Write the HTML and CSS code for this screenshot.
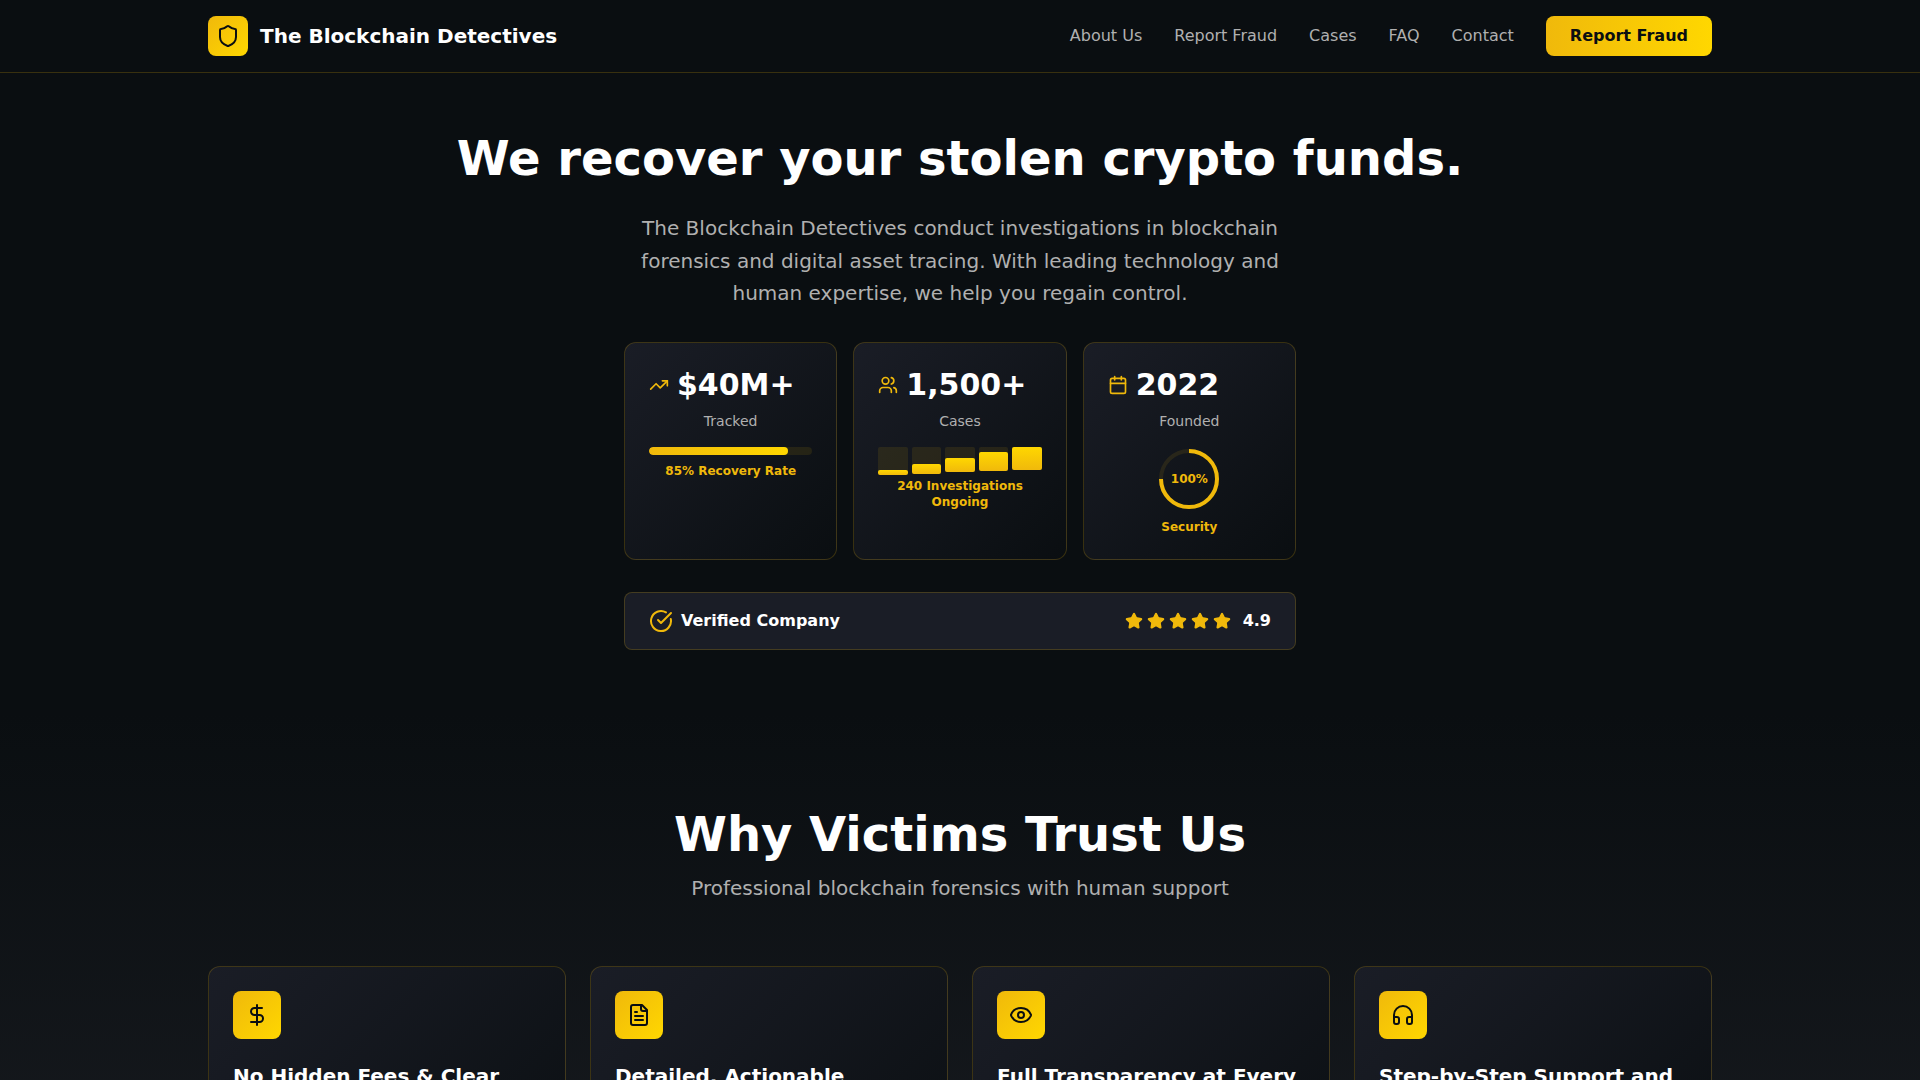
FILE: index.html
```html
<!DOCTYPE html>
<html lang="en">
<head>
<meta charset="utf-8">
<meta name="viewport" content="width=device-width, initial-scale=1">
<title>The Blockchain Detectives</title>
<link rel="stylesheet" href="styles.css">
</head>
<body>
<svg class="sprite" aria-hidden="true">
  <symbol id="star" viewBox="0 0 24 24"><path d="M11.525 2.295a.53.53 0 0 1 .95 0l2.31 4.679a2.123 2.123 0 0 0 1.595 1.16l5.166.756a.53.53 0 0 1 .294.904l-3.736 3.638a2.123 2.123 0 0 0-.611 1.878l.882 5.14a.53.53 0 0 1-.771.56l-4.618-2.428a2.122 2.122 0 0 0-1.973 0L6.396 21.01a.53.53 0 0 1-.77-.56l.881-5.139a2.122 2.122 0 0 0-.611-1.879L2.16 9.795a.53.53 0 0 1 .294-.906l5.165-.755a2.122 2.122 0 0 0 1.597-1.16z"/></symbol>
</svg>

<header class="header">
  <div class="container header-inner">
    <a class="brand" href="#">
      <span class="tile tile-small"><svg class="icon" viewBox="0 0 24 24"><path d="M20 13c0 5-3.5 7.5-7.66 8.95a1 1 0 0 1-.67-.01C7.5 20.5 4 18 4 13V6a1 1 0 0 1 1-1c2 0 4.500-1.200 6.240-2.720a1.170 1.170 0 0 1 1.520 0C14.510 3.810 17 5 19 5a1 1 0 0 1 1 1z"/></svg></span>
      <span class="brand-name">The Blockchain Detectives</span>
    </a>
    <nav class="nav">
      <a href="#about">About Us</a>
      <a href="#report">Report Fraud</a>
      <a href="#cases">Cases</a>
      <a href="#faq">FAQ</a>
      <a href="#contact">Contact</a>
      <button class="button" type="button">Report Fraud</button>
    </nav>
  </div>
</header>

<main>
  <section class="hero">
    <h1 class="title">We recover your stolen crypto funds.</h1>
    <p class="lead">The Blockchain Detectives conduct investigations in blockchain forensics and digital asset tracing. With leading technology and human expertise, we help you regain control.</p>

    <div class="stats">
      <article class="card stat">
        <div class="stat-head">
          <svg class="icon gold" viewBox="0 0 24 24"><path d="M22 7 13.500 15.500 8.500 10.500 2 17"/><path d="M16 7h6v6"/></svg>
          <span class="stat-value">$40M+</span>
        </div>
        <p class="stat-label">Tracked</p>
        <div class="progress"><div class="progress-fill" style="width:85%"></div></div>
        <p class="stat-note">85% Recovery Rate</p>
      </article>

      <article class="card stat">
        <div class="stat-head">
          <svg class="icon gold" viewBox="0 0 24 24"><path d="M16 21v-2a4 4 0 0 0-4-4H6a4 4 0 0 0-4 4v2"/><circle cx="9" cy="7" r="4"/><path d="M22 21v-2a4 4 0 0 0-3-3.870"/><path d="M16 3.130a4 4 0 0 1 0 7.750"/></svg>
          <span class="stat-value">1,500+</span>
        </div>
        <p class="stat-label">Cases</p>
        <div class="bars">
          <div class="bar" style="height:28px"><div class="bar-fill" style="height:5px"></div></div>
          <div class="bar" style="height:27px"><div class="bar-fill" style="height:10px"></div></div>
          <div class="bar" style="height:25px"><div class="bar-fill" style="height:14px"></div></div>
          <div class="bar" style="height:24px"><div class="bar-fill" style="height:19px"></div></div>
          <div class="bar" style="height:23px"><div class="bar-fill" style="height:23px"></div></div>
        </div>
        <p class="stat-note">240 Investigations Ongoing</p>
      </article>

      <article class="card stat">
        <div class="stat-head">
          <svg class="icon gold" viewBox="0 0 24 24"><path d="M8 2v4"/><path d="M16 2v4"/><rect x="3" y="4" width="18" height="18" rx="2"/><path d="M3 10h18"/></svg>
          <span class="stat-value">2022</span>
        </div>
        <p class="stat-label">Founded</p>
        <div class="ring">
          <svg class="ring-drawing" viewBox="0 0 64 64"><circle class="ring-track" cx="32" cy="32" r="28"/><path class="ring-arc" d="M32 4A28 28 0 1 1 4 32"/></svg>
          <span class="ring-text">100%</span>
        </div>
        <p class="stat-note">Security</p>
      </article>
    </div>

    <div class="verified">
      <div class="verified-name">
        <svg class="icon icon-large gold" viewBox="0 0 24 24"><path d="M21.801 10A10 10 0 1 1 17 3.335"/><path d="m9 11 3 3L22 4"/></svg>
        <span>Verified Company</span>
      </div>
      <div class="rating">
        <div class="stars">
          <svg class="star"><use href="#star"/></svg>
          <svg class="star"><use href="#star"/></svg>
          <svg class="star"><use href="#star"/></svg>
          <svg class="star"><use href="#star"/></svg>
          <svg class="star"><use href="#star"/></svg>
        </div>
        <span>4.9</span>
      </div>
    </div>
  </section>

  <section class="trust">
    <div class="container">
      <h2 class="title trust-title">Why Victims Trust Us</h2>
      <p class="subtitle">Professional blockchain forensics with human support</p>
      <div class="features">
        <article class="card feature">
          <span class="tile"><svg class="icon icon-large" viewBox="0 0 24 24"><path d="M12 2v20"/><path d="M17 5H9.500a3.500 3.500 0 0 0 0 7h5a3.500 3.500 0 0 1 0 7H6"/></svg></span>
          <h3 class="feature-title">No Hidden Fees &amp; Clear</h3>
        </article>
        <article class="card feature">
          <span class="tile"><svg class="icon icon-large" viewBox="0 0 24 24"><path d="M15 2H6a2 2 0 0 0-2 2v16a2 2 0 0 0 2 2h12a2 2 0 0 0 2-2V7Z"/><path d="M14 2v4a2 2 0 0 0 2 2h4"/><path d="M10 9H8"/><path d="M16 13H8"/><path d="M16 17H8"/></svg></span>
          <h3 class="feature-title">Detailed, Actionable</h3>
        </article>
        <article class="card feature">
          <span class="tile"><svg class="icon icon-large" viewBox="0 0 24 24"><path d="M2.062 12.348a1 1 0 0 1 0-.696 10.750 10.750 0 0 1 19.876 0 1 1 0 0 1 0 .696 10.750 10.750 0 0 1-19.876 0"/><circle cx="12" cy="12" r="3"/></svg></span>
          <h3 class="feature-title">Full Transparency at Every</h3>
        </article>
        <article class="card feature">
          <span class="tile"><svg class="icon icon-large" viewBox="0 0 24 24"><path d="M3 14h3a2 2 0 0 1 2 2v3a2 2 0 0 1-2 2H5a2 2 0 0 1-2-2v-7a9 9 0 0 1 18 0v7a2 2 0 0 1-2 2h-1a2 2 0 0 1-2-2v-3a2 2 0 0 1 2-2h3"/></svg></span>
          <h3 class="feature-title">Step-by-Step Support and</h3>
        </article>
      </div>
    </div>
  </section>
</main>
</body>
</html>
```
FILE: styles.css
```css
:root {
  --bg: #0a0e11;
  --surface: #1a1d26;
  --section-end: #1a1d22;
  --gold: #f0b90b;
  --gold-bright: #ffd700;
  --muted: #b0b0b0;
  --line: rgba(240, 185, 11, 0.2);
}

* {
  box-sizing: border-box;
  margin: 0;
  padding: 0;
}

body {
  background: var(--bg);
  color: #fff;
  font-family: "DejaVu Sans", sans-serif;
  font-size: 16px;
  line-height: 24px;
}

a {
  color: inherit;
  text-decoration: none;
}

.sprite {
  display: none;
}

.container {
  max-width: 1536px;
  margin: 0 auto;
  padding: 0 16px;
}

.icon {
  width: 20px;
  height: 20px;
  flex-shrink: 0;
  fill: none;
  stroke: currentColor;
  stroke-width: 2;
  stroke-linecap: round;
  stroke-linejoin: round;
}

.icon-large {
  width: 24px;
  height: 24px;
}

.gold {
  color: var(--gold);
}

.tile {
  display: flex;
  align-items: center;
  justify-content: center;
  width: 48px;
  height: 48px;
  border-radius: 8px;
  background: linear-gradient(135deg, var(--gold), var(--gold-bright));
  color: var(--bg);
}

.tile-small {
  width: 40px;
  height: 40px;
}

.tile-small .icon {
  width: 24px;
  height: 24px;
}

.header {
  border-bottom: 1px solid var(--line);
}

.header-inner {
  display: flex;
  align-items: center;
  justify-content: space-between;
  padding-top: 16px;
  padding-bottom: 16px;
}

.brand {
  display: flex;
  align-items: center;
  gap: 12px;
}

.brand-name {
  font-size: 20px;
  line-height: 28px;
  font-weight: 700;
}

.nav {
  display: flex;
  align-items: center;
  gap: 32px;
  color: var(--muted);
}

.button {
  padding: 8px 24px;
  border: 0;
  border-radius: 8px;
  background: linear-gradient(90deg, var(--gold), var(--gold-bright));
  color: var(--bg);
  font: inherit;
  font-weight: 700;
}

.hero {
  display: flex;
  flex-direction: column;
  align-items: center;
  padding: 55px 16px 64px;
}

.title {
  font-size: 48px;
  line-height: 60px;
  font-weight: 700;
  text-align: center;
}

.lead {
  max-width: 672px;
  margin: 24px 0 32px;
  color: var(--muted);
  font-size: 20px;
  line-height: 1.625;
  text-align: center;
}

.card {
  border: 1px solid var(--line);
  border-radius: 12px;
  padding: 24px;
  background: linear-gradient(135deg, var(--surface), var(--bg));
}

.stats {
  display: grid;
  grid-template-columns: repeat(3, 1fr);
  gap: 16px;
  width: 100%;
  max-width: 672px;
}

.stat {
  text-align: center;
}

.stat-head {
  display: flex;
  align-items: center;
  gap: 8px;
  margin-bottom: 8px;
}

.stat-value {
  font-size: 30px;
  line-height: 36px;
  font-weight: 700;
}

.stat-label {
  margin-bottom: 16px;
  color: var(--muted);
  font-size: 14px;
  line-height: 20px;
}

.stat-note {
  margin-top: 8px;
  color: var(--gold);
  font-size: 12px;
  line-height: 16px;
  font-weight: 700;
}

.progress {
  height: 8px;
  border-radius: 4px;
  background: rgba(240, 185, 11, 0.1);
  overflow: hidden;
}

.progress-fill {
  height: 100%;
  border-radius: 4px;
  background: linear-gradient(90deg, var(--gold), var(--gold-bright));
}

.bars {
  display: flex;
  align-items: flex-start;
  gap: 4px;
  height: 23px;
}

.bar {
  display: flex;
  flex: 1;
  align-items: flex-end;
  border-radius: 2px;
  background: rgba(240, 185, 11, 0.1);
}

.bar-fill {
  width: 100%;
  border-radius: 2px;
  background: linear-gradient(0deg, var(--gold), var(--gold-bright));
}

.ring {
  display: grid;
  place-items: center;
}

.ring-drawing,
.ring-text {
  grid-area: 1 / 1;
}

.ring-drawing {
  width: 64px;
  height: 64px;
  fill: none;
  stroke: var(--gold);
  stroke-width: 4;
}

.ring-track {
  opacity: 0.1;
}

.ring-text {
  color: var(--gold);
  font-size: 12px;
  line-height: 16px;
  font-weight: 700;
}

.verified {
  display: flex;
  align-items: center;
  justify-content: space-between;
  width: 100%;
  max-width: 672px;
  margin-top: 32px;
  padding: 16px 24px;
  border: 1px solid var(--line);
  border-radius: 8px;
  background: var(--surface);
  font-weight: 700;
}

.verified-name {
  display: flex;
  align-items: center;
  gap: 8px;
}

.rating {
  display: flex;
  align-items: center;
  gap: 12px;
}

.stars {
  display: flex;
  gap: 4px;
}

.star {
  width: 18px;
  height: 18px;
  fill: var(--gold);
  stroke: var(--gold);
  stroke-width: 2;
  stroke-linejoin: round;
}

.trust {
  padding: 96px 0;
  background: linear-gradient(180deg, var(--bg), var(--section-end));
}

.trust-title {
  line-height: 48px;
}

.subtitle {
  margin: 16px 0 64px;
  color: var(--muted);
  font-size: 20px;
  line-height: 28px;
  text-align: center;
}

.features {
  display: grid;
  grid-template-columns: repeat(4, 1fr);
  gap: 24px;
}

.feature {
  min-height: 280px;
}

.feature-title {
  margin-top: 24px;
  font-size: 20px;
  line-height: 26px;
  font-weight: 700;
}
```
